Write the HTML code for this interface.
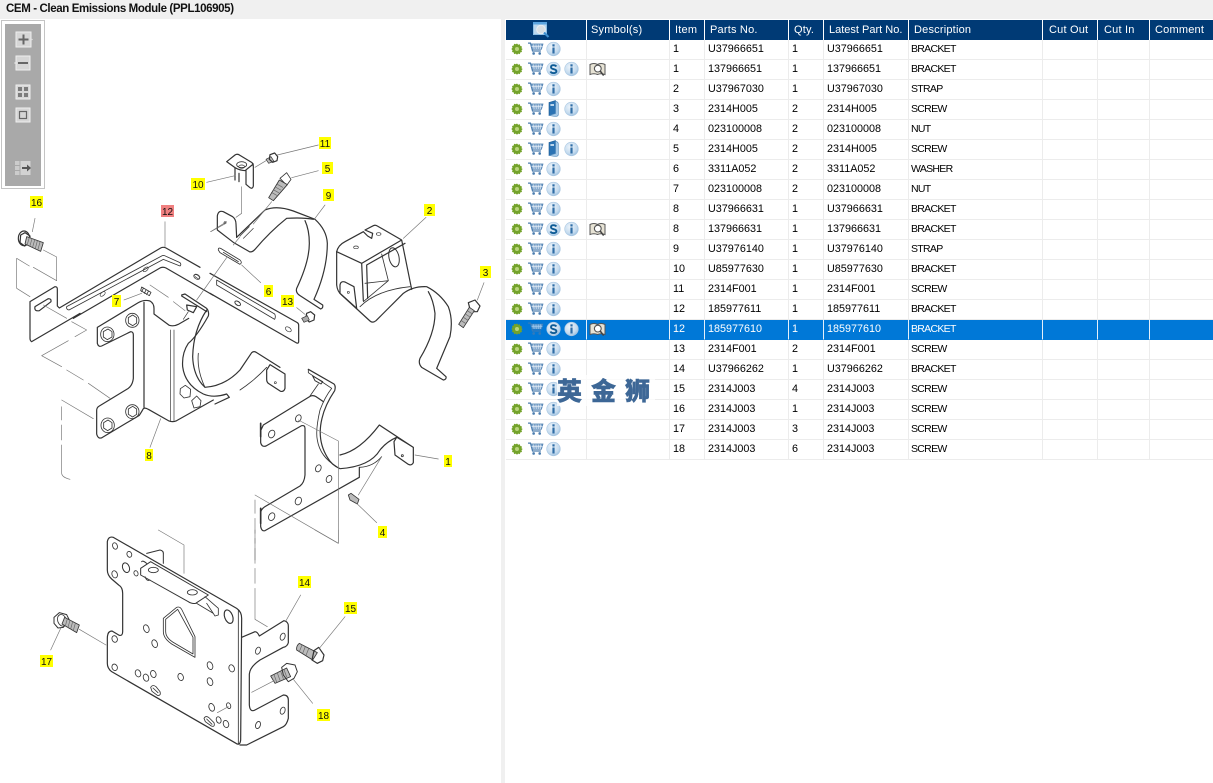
<!DOCTYPE html>
<html><head><meta charset="utf-8"><title>CEM</title>
<style>
html,body{margin:0;padding:0;background:#fff;width:1213px;height:783px;overflow:hidden;font-family:"Liberation Sans","Noto Sans CJK SC",sans-serif}
#bar{position:absolute;left:0;top:0;width:1213px;height:19px;background:#f0f0f0;font-size:11.5px;font-weight:bold;line-height:18px;color:#111;padding-left:6px;box-sizing:border-box;letter-spacing:-.38px}
#split{position:absolute;left:501px;top:19px;width:4px;height:764px;background:#f0f0f0}
#dia{position:absolute;left:0;top:0}
table{position:absolute;left:506px;top:20px;width:707px;border-collapse:separate;border-spacing:0;table-layout:fixed;font-size:10.8px;color:#000}
th{background:#003a75;color:#fff;font-weight:normal;text-align:left;height:20px;padding:0 0 0 5px;border-right:1px solid #fff;box-sizing:border-box;letter-spacing:.2px;font-size:11px;white-space:nowrap;overflow:hidden}
th:last-child{border-right:0}
td{height:20px;padding:0 0 0 3px;border-right:1px solid #ececec;border-bottom:1px solid #ececec;box-sizing:border-box;white-space:nowrap;overflow:hidden;line-height:19px;vertical-align:top}
td:last-child{border-right:0}
td.i{padding:0;position:relative}
td.i svg{position:absolute;left:0;top:0}
td.d{font-size:10.5px;letter-spacing:-.7px;padding-left:2px}
tr.s td{background:#0078d7;color:#fff;border-right-color:#e6f0fa;border-bottom-color:#0078d7}
#wm{position:absolute;left:557px;top:375px;width:98px;height:31px;background:rgba(255,255,255,.75);color:#3d6796;font:900 25px/31px "Noto Sans CJK SC",sans-serif;letter-spacing:9px;white-space:nowrap;overflow:hidden;-webkit-text-stroke:.4px #3d6796}
.l text{font:10px "Liberation Sans",sans-serif;fill:#111;text-anchor:middle}
</style></head><body>
<svg width="0" height="0" style="position:absolute">
<defs>
<radialGradient id="gi" cx=".4" cy=".35" r=".75"><stop offset="0" stop-color="#eef5fb"/><stop offset=".65" stop-color="#c3daee"/><stop offset="1" stop-color="#8fb6d9"/></radialGradient>
<symbol id="g" viewBox="0 0 12 12"><path d="M6 .5l1.2 1.3 1.7-.5.4 1.7 1.7.5-.5 1.7L11.7 6l-1.2 1.3.5 1.7-1.7.4-.4 1.7-1.7-.5L6 11.8l-1.2-1.2-1.7.5-.4-1.7-1.7-.4.5-1.7L.3 6l1.2-1.3-.5-1.7 1.700-.5.4-1.7 1.7.5z" fill="#74a32b"/><circle cx="6" cy="6" r="2" fill="#b9d57c"/></symbol>
<symbol id="c" viewBox="0 0 17 15"><path d="M.5 1.2h2.6l2.2 8.4h9" fill="none" stroke="#4a7cae" stroke-width="1.3"/><path d="M3.6 2.2H16.5l-1.6 5.6H5z" fill="#8fb1d3" stroke="#4a7cae" stroke-width=".8"/><path d="M6.500 2.500l.5 5M9 2.500l.3 5M11.500 2.500v5M14 2.500l-.4 5M4.300 5h11.600" stroke="#e8f0f8" stroke-width=".6"/><circle cx="6.500" cy="12.300" r="1.400" fill="#4a7cae"/><circle cx="13" cy="12.300" r="1.400" fill="#4a7cae"/></symbol>
<symbol id="n" viewBox="0 0 15 15"><circle cx="7.500" cy="7.500" r="6.800" fill="url(#gi)" stroke="#a9c7e2" stroke-width=".6"/><rect x="6.400" y="2.800" width="2.200" height="2.200" fill="#2f6da6"/><rect x="6.400" y="6" width="2.200" height="6" fill="#2f6da6"/></symbol>
<symbol id="z" viewBox="0 0 15 15"><circle cx="7.500" cy="7.500" r="6.800" fill="url(#gi)" stroke="#a9c7e2" stroke-width=".6"/><path d="M10.300 5Q9.600 3.700 7.500 3.700 5 3.700 5 5.600c0 2.800 5.400 1.300 5.400 4 0 1.900-2.600 2-3.100 2-1.400 0-2.400-.6-2.900-1.600" fill="none" stroke="#0f5c96" stroke-width="1.900"/></symbol>
<symbol id="b" viewBox="0 0 11 17"><path d="M1 2.500L7.500.5v13L1 15.500z" fill="#2b73b4" stroke="#1d5a92" stroke-width=".6"/><path d="M7.500 1.200q2.800.8 2.800 2.500v11q0 1.600-3.200 1.800L1 15.500l6.500-2z" fill="#a9cbe8" stroke="#4d87ba" stroke-width=".6"/><rect x="2.400" y="4" width="3.600" height="2" fill="#bcd6ec"/></symbol>
<symbol id="k" viewBox="0 0 17 15"><path d="M1 2.500Q5 .6 8.500 2.500 12 .6 16 2.500V12.500Q12 11 8.500 12.500 5 11 1 12.500z" fill="#e7e3d5" stroke="#555" stroke-width="1"/><path d="M8.500 2.500v3" stroke="#555"/><circle cx="8.800" cy="6.600" r="3.400" fill="#fff" stroke="#555" stroke-width="1.100"/><path d="M11.200 9l3.400 4.600" stroke="#444" stroke-width="1.500"/></symbol>
</defs></svg>

<div id="bar">CEM - Clean Emissions Module (PPL106905)</div>
<div id="split"></div>

<svg id="dia" width="501" height="783" viewBox="0 0 501 783">
<!-- toolbar -->
<rect x="1.500" y="20.500" width="43" height="168" fill="#fff" stroke="#c4c4c4"/>
<rect x="5" y="24" width="36" height="162" fill="#a9a9a9"/>
<g>
<rect x="16" y="32" width="15" height="15" fill="#d6d6d6" stroke="#eee"/><path d="M31 38l2 1.500-2 1.500z" fill="#ddd"/><path d="M23.500 34.500v10M18.500 39.500h10" stroke="#666" stroke-width="2"/>
<rect x="16" y="56" width="14" height="14" fill="#d6d6d6" stroke="#eee"/><path d="M16 61l-2 2 2 2z" fill="#ddd"/><path d="M18 63h10" stroke="#666" stroke-width="2"/>
<rect x="16" y="85" width="14" height="14" fill="#d6d6d6" stroke="#eee"/><path d="M18 87h4v4h-4zM24 87h4v4h-4zM18 93h4v4h-4zM24 93h4v4h-4z" fill="#7c7c7c"/>
<rect x="16" y="108" width="14" height="14" fill="#d6d6d6" stroke="#eee"/><rect x="19.500" y="111.500" width="7" height="7" fill="none" stroke="#666" stroke-width="1.200"/>
<rect x="15" y="161" width="4.500" height="4" fill="#ccc"/><rect x="15" y="166" width="4.500" height="4" fill="#ccc"/><rect x="15" y="171" width="4.500" height="4" fill="#ccc"/>
<rect x="20.500" y="161" width="10" height="14" fill="#d2d2d2"/><path d="M22 168h6" stroke="#555" stroke-width="2"/><path d="M27 164.500l4 3.500-4 3.500z" fill="#555"/>
</g>

<g fill="none" stroke="#333" stroke-linejoin="round" stroke-linecap="round">
<!-- Group A -->
<g transform="translate(0,190) scale(.33333)" stroke-width="3.600">
<path d="M90 335L165 290Q172 290 172 297V348L178 354 482 174Q490 170 498 174L600 232M95 455L240 370M220 385L482 233Q490 230 498 234L640 316M90 335V445Q90 452 95 455"/>
<path d="M200 350L487 197Q492 195 500 200L540 218Q545 224 540 228L490 208 207 360Q198 358 200 350Z" stroke-width="2.500"/>
<path d="M105 350L145 326Q155 326 153 335L118 362Q102 365 105 350Z"/>
<g stroke-width="2"><ellipse cx="308" cy="312" rx="9" ry="5" transform="rotate(-40 308 312)"/><ellipse cx="437" cy="238" rx="9" ry="5" transform="rotate(-40 437 238)"/><ellipse cx="592" cy="259" rx="9" ry="5" transform="rotate(35 592 259)"/><ellipse cx="713" cy="340" rx="9" ry="5" transform="rotate(35 713 340)"/></g>
<!-- bracket 8 -->
<path d="M292 412L415 338Q432 328 450 333 462 340 462 355V372L508 406Q522 410 535 403L566 385M432 337V652M292 412V460Q295 472 305 468L392 425Q400 425 400 435V565Q398 585 385 595L298 648Q290 652 290 662V732Q294 748 306 743L418 676Q425 665 430 656 435 652 445 658L505 692Q518 698 530 692L640 630"/>
<path d="M512 420V692M522 420V692" stroke-width="2"/>
<path d="M545 315L555 312 620 355Q628 365 625 378 590 440 565 460 545 490 548 530 555 585 610 612 640 625 680 612L688 622 645 642"/>
<path d="M560 345L590 350 580 368 562 360ZM545 318L620 365"/>
<path d="M565 365L550 388" stroke-width="2"/>
<!-- nuts -->
<g stroke-width="2.500"><ellipse cx="322" cy="433" rx="20" ry="22"/><path d="M310 425L324 417 336 425 336 441 322 449 310 441Z"/><ellipse cx="397" cy="391" rx="20" ry="21"/><path d="M385 383L398 375 410 383 410 399 398 407 385 399Z"/><ellipse cx="323" cy="706" rx="20" ry="22"/><path d="M311 698L324 690 336 698 336 714 323 722 311 714Z"/><ellipse cx="397" cy="665" rx="20" ry="21"/><path d="M385 657L398 649 410 657 410 673 398 681 385 673Z"/><path d="M541 596L556 586 572 598 570 620 552 624 540 612ZM575 632L590 618 603 632 600 650 582 654Z"/></g>
<!-- bolt 16 -->
<ellipse cx="72" cy="145" rx="17" ry="22" stroke-width="3.500"/><path d="M62 135L75 128 90 138 88 158 74 168 60 158Z"/>
<path d="M80 140L130 158 122 184 75 162Z" fill="#bbb" stroke-width="2.500"/>
<path d="M88 142L82 163M96 146L90 167M104 150L98 171M112 153L106 175M120 156L114 178" stroke="#666" stroke-width="2"/>
<!-- part 7 -->
<path d="M425 291L453 307 448 317 422 302ZM430 295L425 305M438 300L433 310M445 304L440 314" stroke-width="2.500"/>
<!-- leaders and dashes -->
<g stroke="#777" stroke-width="2">
<path d="M97 125L105 85M372 330L425 310M450 772L482 686M495 95V170"/>
<path d="M130 180L170 201V272M170 272L100 232M50 205V295L90 320M50 205L88 228"/>
<path d="M130 345L200 385M215 395L260 420 225 440M205 452L125 497 185 530M200 540L250 570M265 580L330 625"/>
<path d="M450 285L505 322M520 335L555 362M185 630L280 686M185 650V690M185 705V750M185 765V850Q186 862 210 868"/>
<path d="M632 125L680 95"/>
</g>
</g>

<!-- Group B -->
<g transform="translate(190,130) scale(.33333)" stroke-width="3.600">
<!-- bracket 12 right part -->
<path d="M60 430L322 578Q326 580 326 586V636Q324 642 318 638L60 490" />
<path d="M80 450L254 552Q258 560 254 568L80 465Z" stroke-width="2.500"/>
<ellipse cx="143" cy="520" rx="10" ry="6" transform="rotate(35 143 520)" stroke-width="2"/><ellipse cx="295" cy="598" rx="10" ry="6" transform="rotate(35 295 598)" stroke-width="2"/><ellipse cx="20" cy="441" rx="10" ry="6" transform="rotate(35 20 441)" stroke-width="2"/>
<!-- clamp of bracket 8 continuing to its ear -->
<path d="M50 540Q10 600 8 680 10 740 45 772Q105 768 150 720L185 668Q192 662 200 668L270 712"/>
<path d="M45 772Q20 720 25 670" stroke-width="2.500"/>
<!-- part 10 -->
<path d="M110 95L135 75Q142 70 150 76L186 98Q190 102 190 110V168Q188 178 180 173L168 163V122M110 95L135 113V150M135 113Q150 122 168 122M147 155L147 130M165 122L190 102"/>
<ellipse cx="155" cy="104" rx="15" ry="9" stroke-width="2.500"/>
<ellipse cx="155" cy="110" rx="9" ry="5" stroke-width="2"/>
<!-- bolts -->
<path d="M228 88L243 80 252 94 236 100Z" fill="#bbb" stroke-width="2"/>
<path d="M240 74L254 69 263 80 261 92 248 97 238 88Z"/>
<path d="M270 145L290 128 303 148 290 166Z" stroke-width="2.500"/>
<path d="M268 150L292 164 250 212 236 203Z" fill="#bbb" stroke-width="2.500"/>
<path d="M262 163L278 172M256 171L272 180M250 179L266 188M244 187L260 196" stroke="#666" stroke-width="2"/>
<!-- strap 9 -->
<path d="M82 258Q85 240 100 245L128 260Q138 268 138 282L140 322M82 258V300L130 337M130 337L178 365Q186 368 195 358 240 305 290 265 340 262 370 268"/>
<path d="M140 322L225 240Q260 225 310 243L375 268Q410 300 412 340 412 420 372 508L398 525Q400 534 392 537L330 497Q316 488 320 475 358 395 358 340 358 300 345 272"/>
<path d="M150 318L178 290M160 325L190 295" stroke-width="2"/>
<circle cx="105" cy="278" r="3" stroke-width="2"/>
<path d="M85 360Q84 352 92 355L150 390Q158 398 150 403L90 368Z M100 367L145 395" stroke-width="2.500"/>
<!-- bracket 2 -->
<path d="M440 365Q445 345 465 335L520 305 533 318 545 325 548 310 525 300 550 287Q556 284 562 288L635 330 665 478M635 330L515 400 520 512M440 365L515 400M645 340L530 405 533 505"/>
<path d="M440 365V465Q442 485 455 495L540 573Q548 580 558 572L640 490Q670 468 710 470 750 490 775 530 790 570 780 620L740 715 768 740Q770 748 760 750L695 712Q684 700 690 685 735 610 735 550 730 510 715 485"/>
<path d="M510 530Q560 480 660 470M575 372L595 452M520 515L595 452M525 460L595 452" stroke-width="2.500"/>
<ellipse cx="612" cy="382" rx="15" ry="29" transform="rotate(-12 612 382)" stroke-width="3"/>
<path d="M450 465Q452 452 465 456L492 470 500 535 450 490Z"/>
<ellipse cx="498" cy="352" rx="7" ry="4" stroke-width="2"/><ellipse cx="566" cy="312" rx="7" ry="4" stroke-width="2"/><circle cx="475" cy="487" r="3" stroke-width="2"/>
<!-- bolt 3 -->
<path d="M835 518L855 510 870 528 862 545 842 545Z"/>
<path d="M838 532L853 542 820 593 806 583Z" fill="#bbb" stroke-width="2.500"/>
<path d="M832 542L846 551M826 552L840 561M820 562L834 571M814 572L828 581" stroke="#666" stroke-width="2"/>
<!-- bolt 13 -->
<path d="M350 550L362 545 374 555 372 570 358 576 347 566Z"/>
<path d="M335 565L352 557 358 570 342 577Z" fill="#aaa" stroke-width="2"/>
<g stroke="#777" stroke-width="2">
<path d="M50 157L135 137M195 112L228 92M262 75L385 45M305 143L385 122M375 265L405 225M155 170V250L138 262M62 305L108 280M245 215L190 282M150 320L130 345M112 380L20 510M155 405L212 458M320 533L345 553M640 325L708 262M862 510L882 458"/>
</g>
</g>

<!-- Group C -->
<g transform="translate(240,360) scale(.33333)" stroke-width="3.600">
<path d="M62 212L70 195 212 108Q220 105 228 110L250 125"/>
<path d="M205 28L282 72Q288 78 284 92 255 135 246 175 230 240 262 292 275 315 298 325"/>
<path d="M205 28V38L275 85Q255 110 240 150 226 210 232 240 240 290 290 320" stroke-width="2.500"/>
<path d="M218 48L248 65 243 72 225 62Z" stroke-width="3"/>
<path d="M235 72L210 108" stroke-width="2.500"/>
<!-- ear of bracket 8 clamp -->
<path d="M80 30L90 14 135 42V85Q132 96 122 94L88 72Q80 68 80 58Z"/>
<path d="M0 90Q45 60 80 22" stroke-width="2.500"/>
<circle cx="106" cy="68" r="3" stroke-width="2"/>
<path d="M62 212V248Q65 262 78 258L185 197Q195 195 195 205V345Q193 368 180 378L75 440Q62 448 62 460V500Q65 515 75 512L358 352V322"/>
<path d="M300 285Q360 272 418 195L520 262V308Q515 318 505 313L465 285 462 245 470 232Q440 245 420 270 390 320 300 326"/>
<path d="M470 232L520 262M425 290Q400 320 360 322"  stroke-width="2.500"/>
<path d="M62 190V230M62 445V490" stroke-width="5"/>
<g stroke-width="2.500"><ellipse cx="95" cy="222" rx="9" ry="12" transform="rotate(25 95 222)"/><ellipse cx="175" cy="175" rx="8" ry="11" transform="rotate(25 175 175)"/><ellipse cx="235" cy="325" rx="8" ry="11" transform="rotate(25 235 325)"/><ellipse cx="267" cy="357" rx="8" ry="11" transform="rotate(25 267 357)"/><ellipse cx="175" cy="423" rx="9" ry="12" transform="rotate(25 175 423)"/><ellipse cx="95" cy="470" rx="9" ry="12" transform="rotate(25 95 470)"/><circle cx="487" cy="287" r="3"/></g>
<path d="M325 405L333 400 357 418 352 432 330 420Z" fill="#bbb" stroke-width="2.500"/>
<g stroke="#777" stroke-width="2">
<path d="M175 180L295 243V550L45 405M45 420V460M45 475V520M45 535V600M525 285L595 297M350 430L410 488M355 405L425 290"/>
</g>
</g>

<!-- Group D -->
<g transform="translate(30,530) scale(.33333)" stroke-width="3.600">
<path d="M232 35Q235 18 250 22L620 235Q635 245 635 265L632 630Q630 648 618 640L245 425Q232 415 232 400V325Q232 303 246 303L268 316Q278 318 278 305V190Q278 172 266 165L245 147Q232 135 232 120Z"/>
<path d="M625 240V640" stroke-width="2.500"/>
<path d="M635 322L675 305Q682 305 688 318L762 272Q775 275 775 288V338Q772 350 760 352L690 390Q660 410 658 432V525Q660 548 675 540L760 495Q775 495 775 510V565Q770 585 760 590L650 645H630"/>
<path d="M400 265L440 232Q450 228 456 240L495 320V382L425 342Q400 325 400 305Z M407 268L443 238 489 322V372L428 336Q407 322 407 305Z" stroke-width="2.500"/>
<path d="M332 115L362 95 535 195 497 220Q485 222 475 215L332 135Z M350 70L390 60Q402 62 400 75V100M335 95Q338 90 350 100" stroke-width="3"/>
<path d="M525 200L565 235V255L555 258 530 220 M500 220L550 250M345 140Q350 155 360 150" stroke-width="2.500"/>
<ellipse cx="370" cy="120" rx="15" ry="8" stroke-width="2.500"/><ellipse cx="487" cy="187" rx="15" ry="8" stroke-width="2.500"/>
<g stroke-width="2.500">
<ellipse cx="255" cy="48" rx="7" ry="10" transform="rotate(-20 255 48)"/><ellipse cx="298" cy="73" rx="7" ry="9" transform="rotate(-20 298 73)"/><ellipse cx="288" cy="113" rx="10" ry="15" transform="rotate(-20 288 113)" stroke-width="3"/><ellipse cx="254" cy="133" rx="8" ry="11" transform="rotate(-20 254 133)"/><ellipse cx="318" cy="130" rx="6" ry="8" transform="rotate(-20 318 130)"/><ellipse cx="254" cy="327" rx="8" ry="10" transform="rotate(-20 254 327)"/><ellipse cx="349" cy="296" rx="8" ry="12" transform="rotate(-20 349 296)"/><ellipse cx="374" cy="341" rx="8" ry="12" transform="rotate(-20 374 341)"/><ellipse cx="254" cy="412" rx="8" ry="10" transform="rotate(-20 254 412)"/><ellipse cx="324" cy="430" rx="8" ry="11" transform="rotate(-20 324 430)"/><ellipse cx="348" cy="443" rx="8" ry="11" transform="rotate(-20 348 443)"/><ellipse cx="370" cy="432" rx="8" ry="11" transform="rotate(-20 370 432)"/><ellipse cx="452" cy="441" rx="8" ry="11" transform="rotate(-20 452 441)"/><ellipse cx="540" cy="407" rx="8" ry="12" transform="rotate(-20 540 407)"/><ellipse cx="605" cy="415" rx="8" ry="11" transform="rotate(-20 605 415)"/><ellipse cx="540" cy="455" rx="8" ry="12" transform="rotate(-20 540 455)"/><ellipse cx="545" cy="532" rx="8" ry="12" transform="rotate(-20 545 532)"/><ellipse cx="596" cy="527" rx="6" ry="9" transform="rotate(-20 596 527)"/><ellipse cx="566" cy="570" rx="7" ry="10" transform="rotate(-20 566 570)"/><ellipse cx="588" cy="582" rx="8" ry="11" transform="rotate(-20 588 582)"/><ellipse cx="596" cy="260" rx="12" ry="21" transform="rotate(-20 596 260)" stroke-width="3.500"/><ellipse cx="684" cy="362" rx="7" ry="11" transform="rotate(20 684 362)"/><ellipse cx="758" cy="320" rx="7" ry="11" transform="rotate(20 758 320)"/><ellipse cx="758" cy="542" rx="7" ry="11" transform="rotate(20 758 542)"/><ellipse cx="684" cy="585" rx="7" ry="11" transform="rotate(20 684 585)"/>
<path d="M362 472Q368 462 378 470L390 485Q394 498 382 496L366 484Z M369 474L384 488"/>
<path d="M522 565Q528 555 538 564L552 578Q556 592 544 588L526 575Z M530 567L546 583"/>
</g>
<!-- bolt 17 -->
<path d="M72 262L88 248 110 254 118 270 100 292 84 294 72 280Z" stroke-width="3"/>
<ellipse cx="96" cy="271" rx="13" ry="18" transform="rotate(-20 96 271)" stroke-width="2.500"/>
<path d="M104 262L148 285 140 308 96 282Z" fill="#bbb" stroke-width="2.500"/>
<path d="M112 266L106 288M120 271L114 292M128 275L122 297M136 280L130 301" stroke="#666" stroke-width="2"/>
<!-- bolt 15 -->
<path d="M808 340L862 368 848 390 800 360Q798 348 808 340Z" fill="#bbb" stroke-width="2.500"/>
<path d="M816 345L808 365M826 350L818 370M836 356L828 376" stroke="#666" stroke-width="2"/>
<path d="M852 362L866 352 882 375 878 392 862 400 846 390Z"/>
<!-- bolt 18 -->
<path d="M722 438L770 414 782 440 735 460Z" fill="#bbb" stroke-width="2.500"/>
<path d="M732 434L740 456M742 429L750 451M752 424L760 446M762 419L770 441" stroke="#666" stroke-width="2"/>
<path d="M755 412L770 400 795 405 802 425 792 445 775 455 760 435Z" stroke-width="3"/>
<g stroke="#777" stroke-width="2">
<path d="M385 0L462 45V130M148 298L228 345M92 295L62 360M675 0V40M675 55V100M675 115V160M675 175V268L712 290M768 272L812 195M868 355L945 260M665 487L732 452M790 448L848 520M562 548L595 530M855 0L925 40V0"/>
</g>
</g>
</g>

<!-- labels -->
<g class="l">
<g fill="#ffff00">
<rect x="319" y="137" width="12" height="12"/><rect x="322" y="162" width="11" height="12"/><rect x="191" y="178" width="14" height="12"/><rect x="323" y="189" width="11" height="12"/><rect x="30" y="196" width="13" height="12"/><rect x="424" y="204" width="11" height="12"/><rect x="480" y="266" width="11" height="12"/><rect x="112" y="295" width="9" height="12"/><rect x="264" y="285" width="9" height="12"/><rect x="281" y="295" width="13" height="12"/><rect x="145" y="449" width="8" height="12"/><rect x="444" y="455" width="8" height="12"/><rect x="378" y="526" width="9" height="12"/><rect x="298" y="576" width="13" height="12"/><rect x="344" y="602" width="13" height="12"/><rect x="40" y="655" width="13" height="12"/><rect x="317" y="709" width="13" height="12"/>
<rect x="161" y="205" width="13" height="12" fill="#f08080"/>
</g>
<text x="325" y="147">11</text><text x="327.500" y="172">5</text><text x="198" y="188">10</text><text x="328.500" y="199">9</text><text x="36.500" y="206">16</text><text x="429.500" y="214">2</text><text x="485.500" y="276">3</text><text x="116.500" y="305">7</text><text x="268.500" y="295">6</text><text x="287.500" y="305">13</text><text x="149" y="459">8</text><text x="448" y="465">1</text><text x="382.500" y="536">4</text><text x="304.500" y="586">14</text><text x="350.500" y="612">15</text><text x="46.500" y="665">17</text><text x="323.500" y="719">18</text><text x="167.500" y="215">12</text>
</g>
</svg>

<table>
<colgroup><col style="width:81px"><col style="width:83px"><col style="width:35px"><col style="width:84px"><col style="width:35px"><col style="width:85px"><col style="width:134px"><col style="width:55px"><col style="width:52px"><col></colgroup>
<tr><th style="padding:0;position:relative"><svg width="80" height="20" style="position:absolute;left:0;top:0"><rect x="27.500" y="2.500" width="13" height="12" fill="#bcd8ee" stroke="#8fc0e6"/><rect x="27" y="2" width="14" height="2.500" fill="#5aa4e0"/><circle cx="35" cy="9.500" r="4.300" fill="#d9dfe3" stroke="#e9eef2"/><path d="M38 12.500l4.500 4.500" stroke="#3e8fd0" stroke-width="2"/></svg></th><th style="padding-left:4px">Symbol(s)</th><th>Item</th><th>Parts No.</th><th>Qty.</th><th style="padding-right:0;letter-spacing:0">Latest Part No.</th><th>Description</th><th style="padding-left:6px">Cut Out</th><th style="padding-left:6px">Cut In</th><th>Comment</th></tr>
<tr><td class="i"><svg width="80" height="19"><use href="#g" x="5" y="3" width="12" height="12"/><use href="#c" x="21" y="2" width="17" height="14"/><use href="#n" x="40" y="1.500" width="15" height="15"/></svg></td><td></td><td>1</td><td>U37966651</td><td>1</td><td>U37966651</td><td class="d">BRACKET</td><td></td><td></td><td></td></tr>
<tr><td class="i"><svg width="80" height="19"><use href="#g" x="5" y="3" width="12" height="12"/><use href="#c" x="21" y="2" width="17" height="14"/><use href="#z" x="40" y="1.500" width="15" height="15"/><use href="#n" x="58" y="1.500" width="15" height="15"/></svg></td><td class="i"><svg width="40" height="19"><use href="#k" x="2" y="2" width="17" height="15"/></svg></td><td>1</td><td>137966651</td><td>1</td><td>137966651</td><td class="d">BRACKET</td><td></td><td></td><td></td></tr>
<tr><td class="i"><svg width="80" height="19"><use href="#g" x="5" y="3" width="12" height="12"/><use href="#c" x="21" y="2" width="17" height="14"/><use href="#n" x="40" y="1.500" width="15" height="15"/></svg></td><td></td><td>2</td><td>U37967030</td><td>1</td><td>U37967030</td><td class="d">STRAP</td><td></td><td></td><td></td></tr>
<tr><td class="i"><svg width="80" height="19"><use href="#g" x="5" y="3" width="12" height="12"/><use href="#c" x="21" y="2" width="17" height="14"/><use href="#b" x="42" y="0" width="11" height="17"/><use href="#n" x="58" y="1.500" width="15" height="15"/></svg></td><td></td><td>3</td><td>2314H005</td><td>2</td><td>2314H005</td><td class="d">SCREW</td><td></td><td></td><td></td></tr>
<tr><td class="i"><svg width="80" height="19"><use href="#g" x="5" y="3" width="12" height="12"/><use href="#c" x="21" y="2" width="17" height="14"/><use href="#n" x="40" y="1.500" width="15" height="15"/></svg></td><td></td><td>4</td><td>023100008</td><td>2</td><td>023100008</td><td class="d">NUT</td><td></td><td></td><td></td></tr>
<tr><td class="i"><svg width="80" height="19"><use href="#g" x="5" y="3" width="12" height="12"/><use href="#c" x="21" y="2" width="17" height="14"/><use href="#b" x="42" y="0" width="11" height="17"/><use href="#n" x="58" y="1.500" width="15" height="15"/></svg></td><td></td><td>5</td><td>2314H005</td><td>2</td><td>2314H005</td><td class="d">SCREW</td><td></td><td></td><td></td></tr>
<tr><td class="i"><svg width="80" height="19"><use href="#g" x="5" y="3" width="12" height="12"/><use href="#c" x="21" y="2" width="17" height="14"/><use href="#n" x="40" y="1.500" width="15" height="15"/></svg></td><td></td><td>6</td><td>3311A052</td><td>2</td><td>3311A052</td><td class="d">WASHER</td><td></td><td></td><td></td></tr>
<tr><td class="i"><svg width="80" height="19"><use href="#g" x="5" y="3" width="12" height="12"/><use href="#c" x="21" y="2" width="17" height="14"/><use href="#n" x="40" y="1.500" width="15" height="15"/></svg></td><td></td><td>7</td><td>023100008</td><td>2</td><td>023100008</td><td class="d">NUT</td><td></td><td></td><td></td></tr>
<tr><td class="i"><svg width="80" height="19"><use href="#g" x="5" y="3" width="12" height="12"/><use href="#c" x="21" y="2" width="17" height="14"/><use href="#n" x="40" y="1.500" width="15" height="15"/></svg></td><td></td><td>8</td><td>U37966631</td><td>1</td><td>U37966631</td><td class="d">BRACKET</td><td></td><td></td><td></td></tr>
<tr><td class="i"><svg width="80" height="19"><use href="#g" x="5" y="3" width="12" height="12"/><use href="#c" x="21" y="2" width="17" height="14"/><use href="#z" x="40" y="1.500" width="15" height="15"/><use href="#n" x="58" y="1.500" width="15" height="15"/></svg></td><td class="i"><svg width="40" height="19"><use href="#k" x="2" y="2" width="17" height="15"/></svg></td><td>8</td><td>137966631</td><td>1</td><td>137966631</td><td class="d">BRACKET</td><td></td><td></td><td></td></tr>
<tr><td class="i"><svg width="80" height="19"><use href="#g" x="5" y="3" width="12" height="12"/><use href="#c" x="21" y="2" width="17" height="14"/><use href="#n" x="40" y="1.500" width="15" height="15"/></svg></td><td></td><td>9</td><td>U37976140</td><td>1</td><td>U37976140</td><td class="d">STRAP</td><td></td><td></td><td></td></tr>
<tr><td class="i"><svg width="80" height="19"><use href="#g" x="5" y="3" width="12" height="12"/><use href="#c" x="21" y="2" width="17" height="14"/><use href="#n" x="40" y="1.500" width="15" height="15"/></svg></td><td></td><td>10</td><td>U85977630</td><td>1</td><td>U85977630</td><td class="d">BRACKET</td><td></td><td></td><td></td></tr>
<tr><td class="i"><svg width="80" height="19"><use href="#g" x="5" y="3" width="12" height="12"/><use href="#c" x="21" y="2" width="17" height="14"/><use href="#n" x="40" y="1.500" width="15" height="15"/></svg></td><td></td><td>11</td><td>2314F001</td><td>1</td><td>2314F001</td><td class="d">SCREW</td><td></td><td></td><td></td></tr>
<tr><td class="i"><svg width="80" height="19"><use href="#g" x="5" y="3" width="12" height="12"/><use href="#c" x="21" y="2" width="17" height="14"/><use href="#n" x="40" y="1.500" width="15" height="15"/></svg></td><td></td><td>12</td><td>185977611</td><td>1</td><td>185977611</td><td class="d">BRACKET</td><td></td><td></td><td></td></tr>
<tr class="s"><td class="i"><svg width="80" height="19"><use href="#g" x="5" y="3" width="12" height="12"/><use href="#c" x="21" y="2" width="17" height="14" opacity=".7"/><use href="#z" x="40" y="1.500" width="15" height="15"/><use href="#n" x="58" y="1.500" width="15" height="15"/></svg></td><td class="i"><svg width="40" height="19"><use href="#k" x="2" y="2" width="17" height="15"/></svg></td><td>12</td><td>185977610</td><td>1</td><td>185977610</td><td class="d">BRACKET</td><td></td><td></td><td></td></tr>
<tr><td class="i"><svg width="80" height="19"><use href="#g" x="5" y="3" width="12" height="12"/><use href="#c" x="21" y="2" width="17" height="14"/><use href="#n" x="40" y="1.500" width="15" height="15"/></svg></td><td></td><td>13</td><td>2314F001</td><td>2</td><td>2314F001</td><td class="d">SCREW</td><td></td><td></td><td></td></tr>
<tr><td class="i"><svg width="80" height="19"><use href="#g" x="5" y="3" width="12" height="12"/><use href="#c" x="21" y="2" width="17" height="14"/><use href="#n" x="40" y="1.500" width="15" height="15"/></svg></td><td></td><td>14</td><td>U37966262</td><td>1</td><td>U37966262</td><td class="d">BRACKET</td><td></td><td></td><td></td></tr>
<tr><td class="i"><svg width="80" height="19"><use href="#g" x="5" y="3" width="12" height="12"/><use href="#c" x="21" y="2" width="17" height="14"/><use href="#n" x="40" y="1.500" width="15" height="15"/></svg></td><td></td><td>15</td><td>2314J003</td><td>4</td><td>2314J003</td><td class="d">SCREW</td><td></td><td></td><td></td></tr>
<tr><td class="i"><svg width="80" height="19"><use href="#g" x="5" y="3" width="12" height="12"/><use href="#c" x="21" y="2" width="17" height="14"/><use href="#n" x="40" y="1.500" width="15" height="15"/></svg></td><td></td><td>16</td><td>2314J003</td><td>1</td><td>2314J003</td><td class="d">SCREW</td><td></td><td></td><td></td></tr>
<tr><td class="i"><svg width="80" height="19"><use href="#g" x="5" y="3" width="12" height="12"/><use href="#c" x="21" y="2" width="17" height="14"/><use href="#n" x="40" y="1.500" width="15" height="15"/></svg></td><td></td><td>17</td><td>2314J003</td><td>3</td><td>2314J003</td><td class="d">SCREW</td><td></td><td></td><td></td></tr>
<tr><td class="i"><svg width="80" height="19"><use href="#g" x="5" y="3" width="12" height="12"/><use href="#c" x="21" y="2" width="17" height="14"/><use href="#n" x="40" y="1.500" width="15" height="15"/></svg></td><td></td><td>18</td><td>2314J003</td><td>6</td><td>2314J003</td><td class="d">SCREW</td><td></td><td></td><td></td></tr>
</table>
<div id="wm">英金狮</div>
</body></html>
